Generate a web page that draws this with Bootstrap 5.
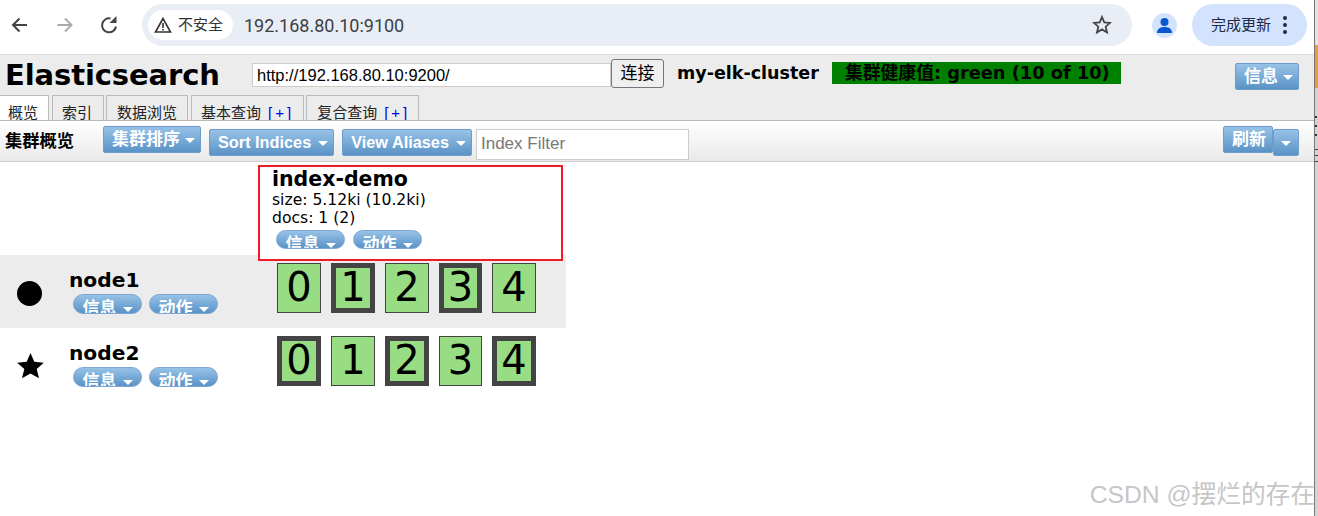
<!DOCTYPE html>
<html lang="zh-CN">
  <head>
    <meta charset="UTF-8" />
    <title>Elasticsearch head</title>
    <link href="https://cdn.jsdelivr.net/npm/bootstrap@5.3.3/dist/css/bootstrap.min.css" rel="stylesheet" />
    <style>
      body { width: 1318px; height: 516px; overflow: hidden; background: #fff; color: #000; font-family: "Liberation Sans", "Noto Sans CJK SC", sans-serif; }
      .app-win { width: 1315px; height: 516px; border-right: 1px solid #777; position: relative; flex: none; }
      .side-strip { width: 3px; height: 516px; background: #d4d4d4; flex: none; display: block; }
      .chrome-bar { height: 55px; border-bottom: 1px solid #dcdcdc; padding-bottom: 4px; }
      .nav-ico { width: 45px; height: 44px; flex: none; }
      .omni { width: 990px; height: 42px; margin-left: 7px; background: #e9edf6; border-radius: 21px; padding: 0 20px 0 6px; flex: none; }
      .secure-pill { height: 30px; width: 85px; background: #fff; border-radius: 15px; font-size: 15px; color: #333; padding-left: 6px; gap: 6px; white-space: nowrap; }
      .omni-url { font-size: 18px; color: #3c4043; margin-left: 11px; font-family: "Roboto", sans-serif; }
      .avatar { width: 25px; height: 25px; border-radius: 50%; background: #d3e3fd; margin-left: 20px; flex: none; }
      .update-pill { width: 115px; height: 42px; background: #d3e3fd; border-radius: 21px; margin-left: 15px; padding-left: 19px; font-size: 15px; color: #1f2a44; flex: none; white-space: nowrap; }
      .kebab { margin-left: 11px; }
      .head-bar { height: 66px; background: #ececec; border-bottom: 1px solid #b8b8b8; position: relative; }
      .head-top { height: 40px; padding-left: 5px; }
      .app-title { font-family: "DejaVu Sans", sans-serif; font-weight: 700; font-size: 29px; width: 247px; line-height: 38px; margin: 0; letter-spacing: -.1px; }
      .url-input { width: 359px; height: 24px; border: 1px solid #ccc; background: #fff; font-size: 16.5px; padding: 0 4px; line-height: 22px; white-space: nowrap; }
      .connect-btn { width: 53px; height: 29px; border: 1px solid #767676; border-radius: 3px; background: #efefef; font-size: 17px; line-height: 25px; padding: 0; margin: 0 13px 3px 0; }
      .cluster-name { font-family: "DejaVu Sans", sans-serif; font-weight: 700; font-size: 17.5px; width: 155px; margin-bottom: 3px; white-space: nowrap; }
      .health-bar { width: 289px; height: 22px; background: #008000; font-weight: 700; font-size: 17.8px; line-height: 22px; padding-left: 13px; margin-bottom: 4px; font-family: "DejaVu Sans", "Noto Sans CJK SC", sans-serif; white-space: nowrap; overflow: hidden; }
      .head-right { margin-left: auto; margin-right: 15px; margin-top: 3px; }
      .es-tabs { gap: 2px; align-items: flex-end; height: 25px; }
      .es-tab { height: 25px; border: 1px solid #bbb; border-bottom: 0; font-size: 15px; padding: 0 10px; line-height: 33px; color: #222; white-space: nowrap; overflow: hidden; }
      .es-tab-on { background: #fff; width: 50px; padding: 0 0 0 8px; margin-left: -1px; }
      .tab-apart { margin-left: 1px; padding: 0 11px 0 9px; }
      .plus { color: #00e; margin: 0 -2px 0 7px; letter-spacing: 3px; }
      .tool-bar { height: 41px; background: linear-gradient(#fff, #e9e9e9); border-bottom: 1px solid #cfcfcf; padding: 5px 0 0 5px; align-items: flex-start; }
      .tool-title { font-weight: 700; font-size: 17.3px; width: 98px; line-height: 27px; margin-top: 2px; white-space: nowrap; }
      .es-btn { background: linear-gradient(#97c2e7, #5a93c6); border: 1px solid #6f9ccb; border-radius: 2px; color: #fff; font-weight: 700; font-size: 16.3px; height: 27px; line-height: 25px; padding: 0 5px 0 8px; white-space: nowrap; font-family: "Liberation Sans", "Noto Sans CJK SC", sans-serif; }
      .caret-down { display: inline-block; border-left: 5px solid transparent; border-right: 5px solid transparent; border-top: 5px solid #fff; margin-left: 7px; vertical-align: 2px; }
      .btn-low { margin-top: 3px; }
      .btn-sort { margin-left: 8px; }
      .btn-alias { margin-left: 8px; }
      .btn-cjk { font-size: 17px; }
      .btn-cjk .caret-down { margin-left: 5px; }
      .btn-refresh { padding-right: 6px; }
      .filter-input { width: 213px; height: 31px; border: 1px solid #ccc; background: #fff; color: #777; font-size: 17px; line-height: 27px; padding-left: 4px; margin: 3px 0 0 4px; }
      .refresh-group { margin-left: auto; margin-right: 15px; align-items: flex-start; }
      .refresh-side { width: 26px; padding: 0; text-align: center; }
      .refresh-side .caret-down { margin-left: 0; }
      .cluster-view { width: 566px; padding-top: 93px; }
      .node-row { height: 73px; }
      .node-shade { background: #ececec; }
      .node-mark { width: 59px; padding-left: 17px; padding-top: 25px; flex: none; line-height: 0; }
      .node-info { width: 218px; padding: 15px 0 0 11px; flex: none; }
      .node-name { font-family: "DejaVu Sans", sans-serif; font-weight: 700; font-size: 20.2px; line-height: 20px; margin: 0 0 4px -1px; }
      .pill-row { gap: 7px; height: 20px; padding-left: 3px; }
      .pill-btn { width: 69px; height: 20px; border: 1px solid #7ea6d4; border-radius: 10px; background: linear-gradient(#97c2e7, #5a93c6); color: #fff; font-weight: 700; font-size: 17px; line-height: 27px; text-align: center; overflow: hidden; white-space: nowrap; }
      .pill-btn .caret-down { margin-left: 6px; }
      .shard-row { gap: 10px; padding-top: 8px; }
      .shard-cell { width: 44px; height: 50px; background: #98dc84; border: 1px solid #444; font-family: "DejaVu Sans", sans-serif; font-size: 40px; line-height: 47px; text-align: center; overflow: hidden; }
      .shard-main { border-width: 5px; line-height: 39px; }
      .shard-narrow { width: 43px; }
      .index-card { position: absolute; left: 258px; top: 165px; width: 305px; height: 96px; border: 2px solid #ee1c25; padding: 1px 0 0 12px; background: #fff; }
      .index-name { font-family: "DejaVu Sans", sans-serif; font-weight: 700; font-size: 20.5px; line-height: 23px; }
      .index-meta { font-family: "DejaVu Sans", sans-serif; font-size: 15.6px; line-height: 18px; white-space: nowrap; }
      .index-card .pill-row { padding-left: 4px; margin-top: 3px; gap: 8px; height: 19px; }
      .index-card .pill-btn { height: 19px; }
      .watermark { position: absolute; right: 3px; top: 480px; font-size: 24.7px; line-height: 30px; color: #c6c6c6; white-space: nowrap; }
    </style>
  </head>
  <body class="d-flex">
    <div class="app-win">
      <div class="chrome-bar d-flex align-items-center">
        <svg class="nav-ico" viewBox="0 0 45 44"><path d="M27 22H13M19.5 15.5 13 22l6.500 6.500" fill="none" stroke="#444" stroke-width="2"/></svg>
        <svg class="nav-ico" viewBox="0 0 45 44"><path d="M12.5 22h14M20 15.5 26.500 22 20 28.500" fill="none" stroke="#aaa" stroke-width="2"/></svg>
        <svg class="nav-ico" viewBox="0 0 45 44"><path d="M20.5 15.5a7 7 0 1 0 5.500 8" fill="none" stroke="#444" stroke-width="2"/><path d="M26.500 13v7h-7z" fill="#444"/></svg>
        <div class="omni d-flex align-items-center">
          <div class="secure-pill d-flex align-items-center">
            <svg width="18" height="16" viewBox="0 0 18 16"><path d="M9 1.500 1.500 15h15z" fill="none" stroke="#333" stroke-width="1.600"/><path d="M8.200 6h1.600v5H8.200zM8.200 12h1.600v1.500H8.200z" fill="#333"/></svg>
            <span>不安全</span>
          </div>
          <span class="omni-url">192.168.80.10:9100</span>
          <svg class="ms-auto" width="20" height="20" viewBox="0 0 20 20"><path d="M10 2l2.300 5.400 5.700.5-4.300 3.800 1.300 5.700L10 14.400l-5 3 1.300-5.700L2 7.900l5.700-.5z" fill="none" stroke="#444" stroke-width="1.800"/></svg>
        </div>
        <div class="avatar d-flex align-items-center justify-content-center">
          <svg width="17" height="17" viewBox="0 0 17 17"><circle cx="8.500" cy="5" r="4" fill="#0b57d0"/><path d="M1 16c0-4 3-6 7.500-6S16 12 16 16z" fill="#0b57d0"/></svg>
        </div>
        <div class="update-pill d-flex align-items-center">
          <span>完成更新</span>
          <svg class="kebab" width="6" height="20" viewBox="0 0 6 20"><circle cx="3" cy="3" r="2" fill="#1f2a44"/><circle cx="3" cy="10" r="2" fill="#1f2a44"/><circle cx="3" cy="17" r="2" fill="#1f2a44"/></svg>
        </div>
      </div>

      <div class="head-bar">
        <div class="head-top d-flex align-items-center">
          <h1 class="app-title">Elasticsearch</h1>
          <div class="url-input">http://192.168.80.10:9200/</div>
          <button class="connect-btn">连接</button>
          <span class="cluster-name">my-elk-cluster</span>
          <div class="health-bar">集群健康值: green (10 of 10)</div>
          <div class="head-right"><div class="es-btn btn-cjk">信息<span class="caret-down"></span></div></div>
        </div>
        <div class="es-tabs d-flex">
          <div class="es-tab es-tab-on">概览</div>
          <div class="es-tab tab-apart">索引</div>
          <div class="es-tab">数据浏览</div>
          <div class="es-tab tab-apart">基本查询<span class="plus">[+]</span></div>
          <div class="es-tab">复合查询<span class="plus">[+]</span></div>
        </div>
      </div>

      <div class="tool-bar d-flex">
        <div class="tool-title">集群概览</div>
        <div class="es-btn btn-cjk">集群排序<span class="caret-down"></span></div>
        <div class="es-btn btn-low btn-sort">Sort Indices<span class="caret-down"></span></div>
        <div class="es-btn btn-low btn-alias">View Aliases<span class="caret-down"></span></div>
        <div class="filter-input">Index Filter</div>
        <div class="refresh-group d-flex">
          <div class="es-btn btn-cjk btn-refresh">刷新</div>
          <div class="es-btn btn-low refresh-side"><span class="caret-down"></span></div>
        </div>
      </div>

      <div class="cluster-view">
        <div class="node-row node-shade d-flex">
          <div class="node-mark"><svg width="26" height="26" viewBox="0 0 26 26"><circle cx="12.500" cy="13.500" r="12.500"/></svg></div>
          <div class="node-info">
            <div class="node-name">node1</div>
            <div class="pill-row d-flex">
              <div class="pill-btn">信息<span class="caret-down"></span></div>
              <div class="pill-btn">动作<span class="caret-down"></span></div>
            </div>
          </div>
          <div class="shard-row d-flex">
            <div class="shard-cell">0</div>
            <div class="shard-cell shard-main">1</div>
            <div class="shard-cell">2</div>
            <div class="shard-cell shard-main shard-narrow">3</div>
            <div class="shard-cell">4</div>
          </div>
        </div>
        <div class="node-row d-flex">
          <div class="node-mark"><svg width="28" height="26" viewBox="0 0 28 26"><path d="M13.500 0l3.800 8.800 9.500.9-7.100 6.400 2.300 9.200-8.500-4.800L5 25.300l2.300-9.200L.2 9.700l9.500-.9z"/></svg></div>
          <div class="node-info">
            <div class="node-name">node2</div>
            <div class="pill-row d-flex">
              <div class="pill-btn">信息<span class="caret-down"></span></div>
              <div class="pill-btn">动作<span class="caret-down"></span></div>
            </div>
          </div>
          <div class="shard-row d-flex">
            <div class="shard-cell shard-main">0</div>
            <div class="shard-cell">1</div>
            <div class="shard-cell shard-main">2</div>
            <div class="shard-cell shard-narrow">3</div>
            <div class="shard-cell shard-main">4</div>
          </div>
        </div>
      </div>

      <div class="index-card">
        <div class="index-name">index-demo</div>
        <div class="index-meta">size: 5.12ki (10.2ki)</div>
        <div class="index-meta">docs: 1 (2)</div>
        <div class="pill-row d-flex">
          <div class="pill-btn">信息<span class="caret-down"></span></div>
          <div class="pill-btn">动作<span class="caret-down"></span></div>
        </div>
      </div>
    </div>
    <svg class="side-strip" viewBox="0 0 3 516">
      <rect width="3" height="45" fill="#e4e4e4"/>
      <rect y="45" width="3" height="43" fill="#dfa23f"/>
      <rect y="116" width="2" height="2" fill="#333"/>
      <rect y="125" width="2" height="2" fill="#333"/>
      <rect y="134" width="2" height="2" fill="#333"/>
      <rect y="149" width="3" height="1" fill="#444"/>
      <rect y="155" width="3" height="1" fill="#444"/>
      <rect y="161" width="3" height="1" fill="#444"/>
    </svg>
    <div class="watermark">CSDN @摆烂的存在</div>
  </body>
</html>
